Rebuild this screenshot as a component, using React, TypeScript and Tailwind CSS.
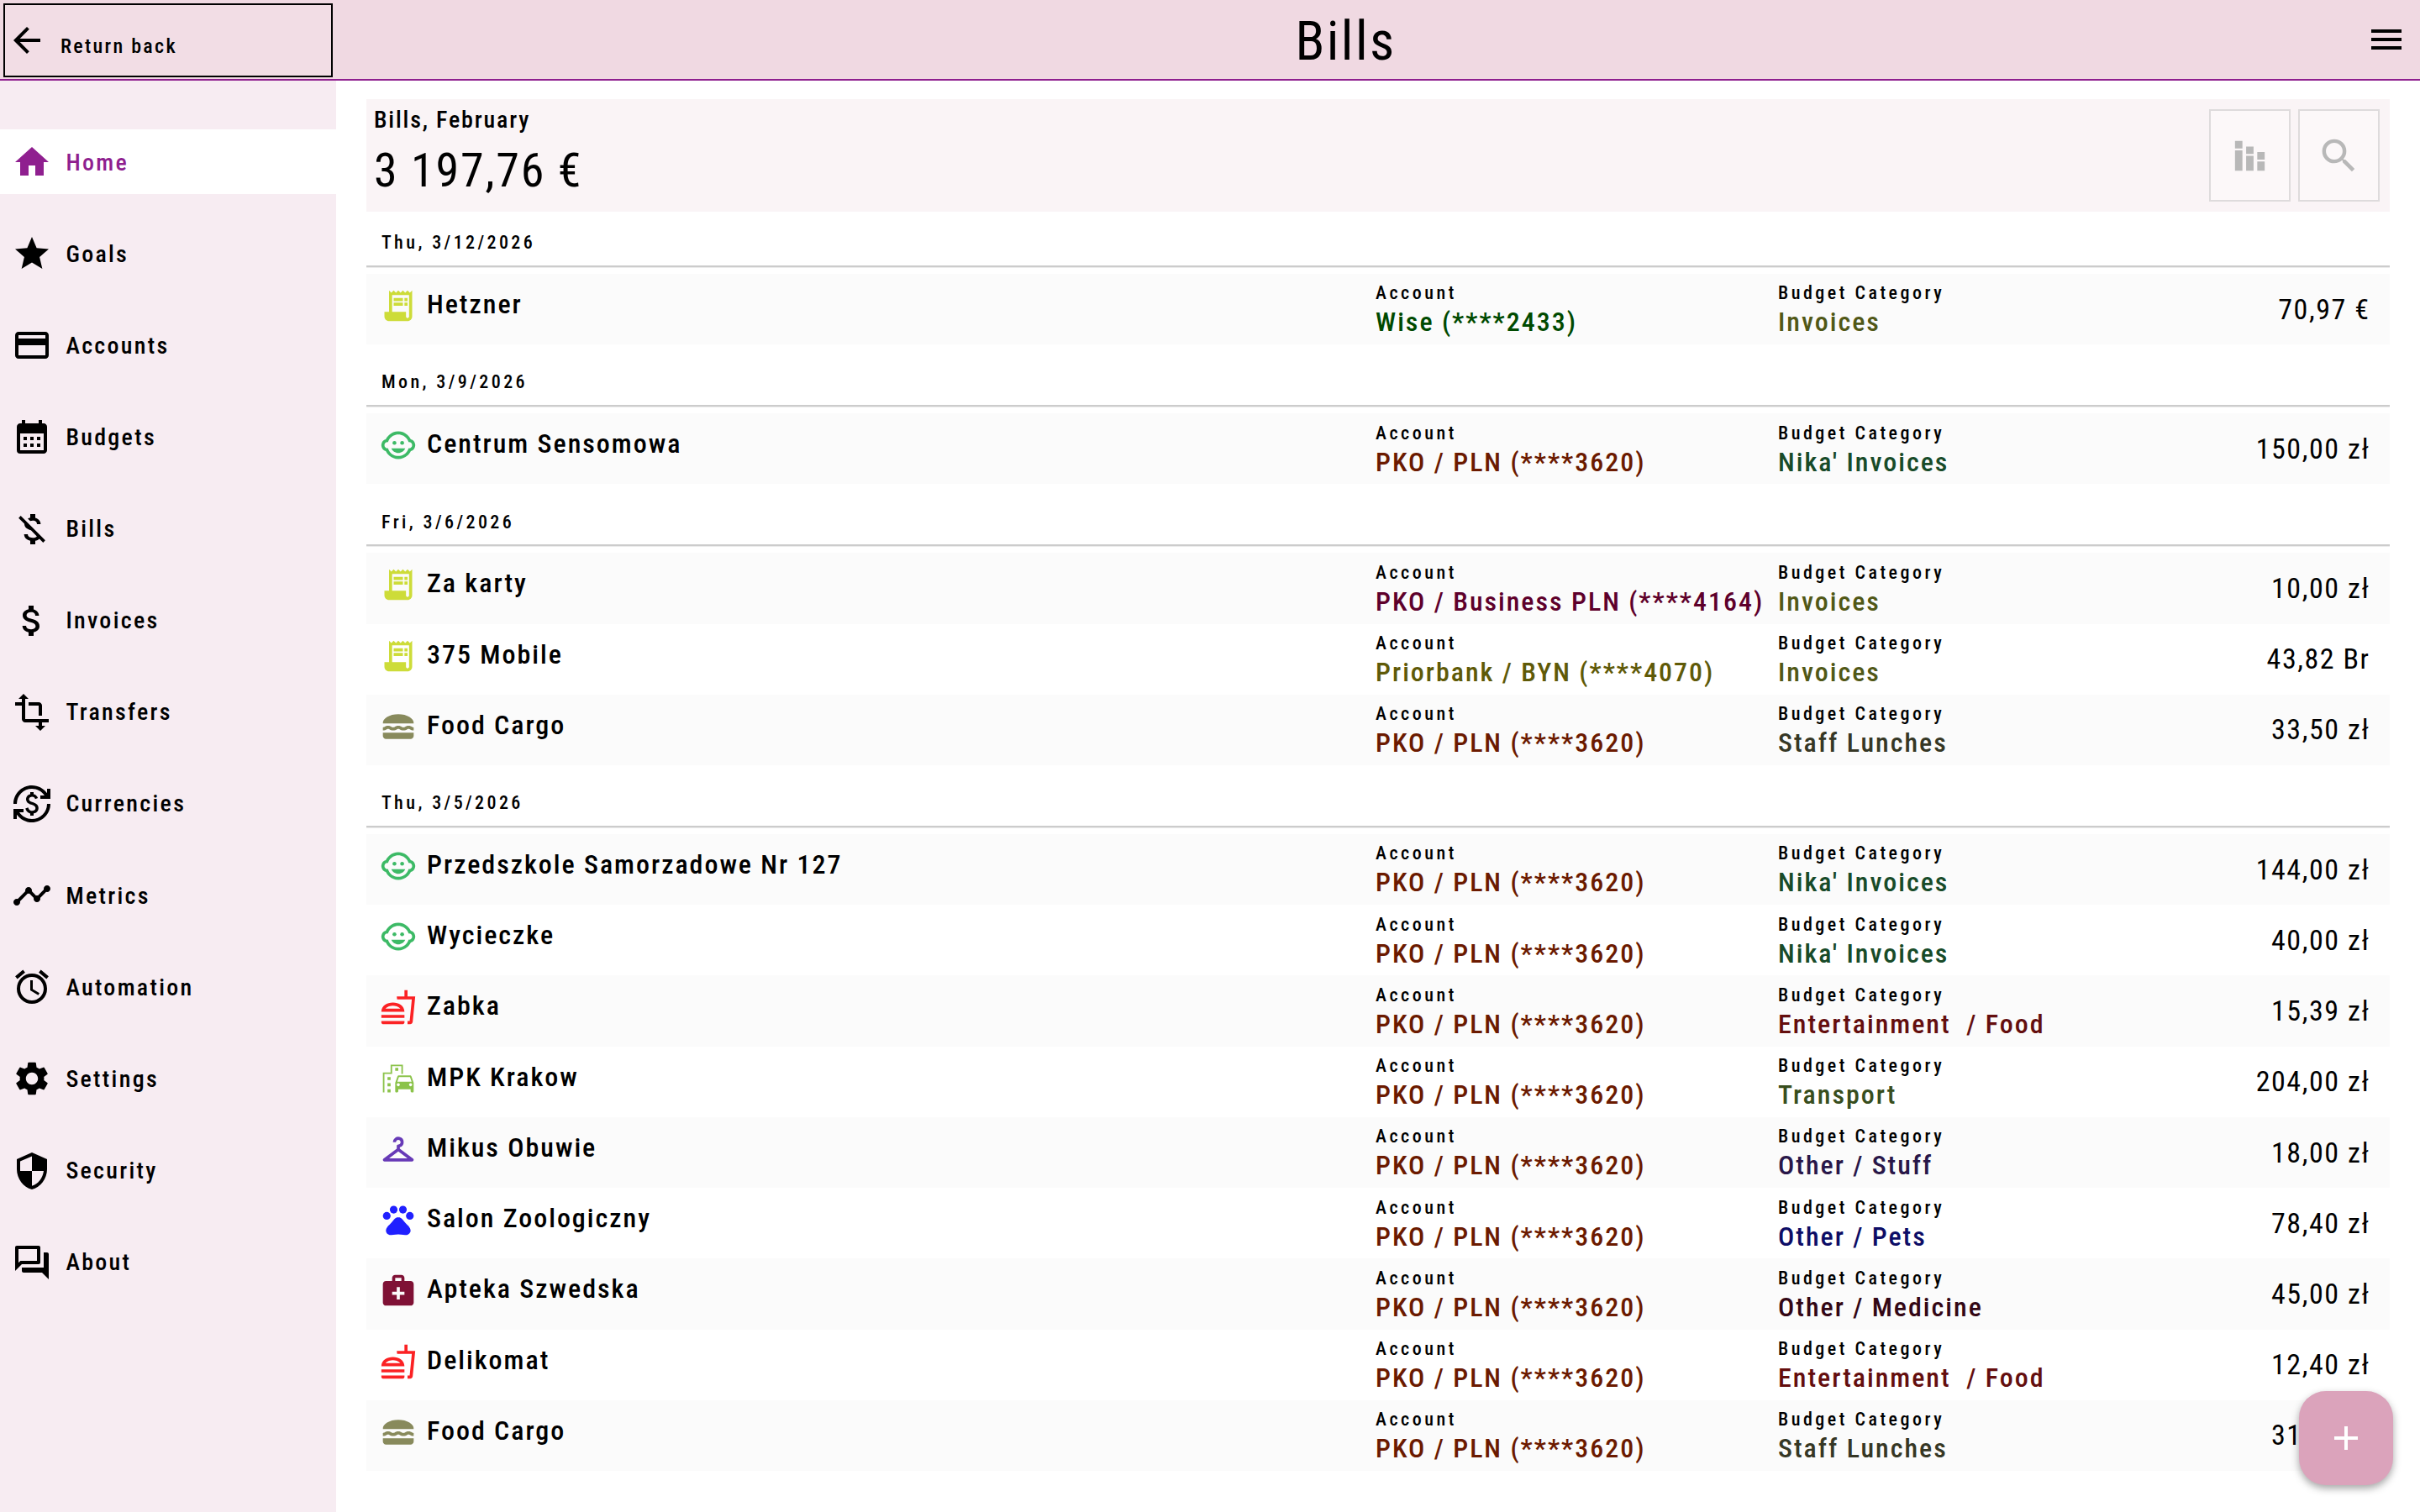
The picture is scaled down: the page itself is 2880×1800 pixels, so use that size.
import React from 'react';
import type { IconType } from 'react-icons';
import {
  MdAdd,
  MdArrowBack,
  MdAttachMoney,
  MdCalendarMonth,
  MdCheckroom,
  MdCreditCard,
  MdCurrencyExchange,
  MdEmojiTransportation,
  MdHome,
  MdLunchDining,
  MdMedicalServices,
  MdMenu,
  MdMoneyOff,
  MdOutlineAlarm,
  MdOutlineChildCare,
  MdOutlineFastfood,
  MdOutlineForum,
  MdPets,
  MdReceiptLong,
  MdSearch,
  MdSecurity,
  MdSettings,
  MdStackedBarChart,
  MdStar,
  MdTimeline,
  MdTransform,
} from 'react-icons/md';

interface Bill {
  name: string;
  kind: keyof typeof kinds;
  account: keyof typeof accounts;
  amount: string;
}

const navItems: { label: string; icon: IconType }[] = [
  { label: 'Home', icon: MdHome },
  { label: 'Goals', icon: MdStar },
  { label: 'Accounts', icon: MdCreditCard },
  { label: 'Budgets', icon: MdCalendarMonth },
  { label: 'Bills', icon: MdMoneyOff },
  { label: 'Invoices', icon: MdAttachMoney },
  { label: 'Transfers', icon: MdTransform },
  { label: 'Currencies', icon: MdCurrencyExchange },
  { label: 'Metrics', icon: MdTimeline },
  { label: 'Automation', icon: MdOutlineAlarm },
  { label: 'Settings', icon: MdSettings },
  { label: 'Security', icon: MdSecurity },
  { label: 'About', icon: MdOutlineForum },
];

const accounts = {
  wise: { label: 'Wise (****2433)', color: 'text-[#004a00]' },
  pko: { label: 'PKO / PLN (****3620)', color: 'text-[#6b1a00]' },
  business: { label: 'PKO / Business PLN (****4164)', color: 'text-[#5e002b]' },
  priorbank: { label: 'Priorbank / BYN (****4070)', color: 'text-[#5f5a08]' },
};

// Icon, icon colour and category text for every kind of bill.
const kinds = {
  invoices: { icon: MdReceiptLong, iconColor: 'text-[#cddc39]', category: 'Invoices', color: 'text-[#515817]' },
  nika: { icon: MdOutlineChildCare, iconColor: 'text-[#3dba66]', category: "Nika' Invoices", color: 'text-[#184b29]' },
  lunches: { icon: MdLunchDining, iconColor: 'text-[#888a5c]', category: 'Staff Lunches', color: 'text-[#363725]' },
  food: { icon: MdOutlineFastfood, iconColor: 'text-[#fb2224]', category: 'Entertainment  / Food', color: 'text-[#640e0e]' },
  transport: { icon: MdEmojiTransportation, iconColor: 'text-[#8bc34a]', category: 'Transport', color: 'text-[#384e1e]' },
  stuff: { icon: MdCheckroom, iconColor: 'text-[#673ab7]', category: 'Other / Stuff', color: 'text-[#291749]' },
  pets: { icon: MdPets, iconColor: 'text-[#2020ff]', category: 'Other / Pets', color: 'text-[#0d0d66]' },
  medicine: { icon: MdMedicalServices, iconColor: 'text-[#7f1135]', category: 'Other / Medicine', color: 'text-[#330715]' },
};

const groups: { date: string; bills: Bill[] }[] = [
  {
    date: 'Thu, 3/12/2026',
    bills: [{ name: 'Hetzner', kind: 'invoices', account: 'wise', amount: '70,97 €' }],
  },
  {
    date: 'Mon, 3/9/2026',
    bills: [{ name: 'Centrum Sensomowa', kind: 'nika', account: 'pko', amount: '150,00 zł' }],
  },
  {
    date: 'Fri, 3/6/2026',
    bills: [
      { name: 'Za karty', kind: 'invoices', account: 'business', amount: '10,00 zł' },
      { name: '375 Mobile', kind: 'invoices', account: 'priorbank', amount: '43,82 Br' },
      { name: 'Food Cargo', kind: 'lunches', account: 'pko', amount: '33,50 zł' },
    ],
  },
  {
    date: 'Thu, 3/5/2026',
    bills: [
      { name: 'Przedszkole Samorzadowe Nr 127', kind: 'nika', account: 'pko', amount: '144,00 zł' },
      { name: 'Wycieczke', kind: 'nika', account: 'pko', amount: '40,00 zł' },
      { name: 'Zabka', kind: 'food', account: 'pko', amount: '15,39 zł' },
      { name: 'MPK Krakow', kind: 'transport', account: 'pko', amount: '204,00 zł' },
      { name: 'Mikus Obuwie', kind: 'stuff', account: 'pko', amount: '18,00 zł' },
      { name: 'Salon Zoologiczny', kind: 'pets', account: 'pko', amount: '78,40 zł' },
      { name: 'Apteka Szwedska', kind: 'medicine', account: 'pko', amount: '45,00 zł' },
      { name: 'Delikomat', kind: 'food', account: 'pko', amount: '12,40 zł' },
      { name: 'Food Cargo', kind: 'lunches', account: 'pko', amount: '31,00 zł' },
    ],
  },
];

const Header: React.FC = () => (
  <header className="flex h-24 items-center border-b-2 border-[#8f1f8f] bg-[#f0d9e2]">
    <div className="h-full w-[400px] p-1 pb-0.5">
      <button className="flex h-[88px] w-full items-center gap-[13px] border-2 border-black bg-[#f2dde5] pl-0.5">
        <MdArrowBack className="size-12" />
        <span className="pt-[14px] pl-[3px] text-[24px] leading-8 font-medium tracking-[2.28px]">Return back</span>
      </button>
    </div>
    <h1 className="w-[2400px] pt-[5px] pl-[3px] text-center text-[64px] leading-[80px] tracking-[2.4px]">Bills</h1>
    <button className="flex w-20 justify-center">
      <MdMenu className="size-12" />
    </button>
  </header>
);

const Sidebar: React.FC = () => (
  <nav className="flex w-[400px] shrink-0 flex-col gap-[32.15px] bg-[#f7ecf2] pt-[58px]">
    {navItems.map(({ label, icon: Icon }, i) => (
      <a
        key={label}
        className={`flex h-[77px] shrink-0 items-center gap-4 pl-[14.4px] ${
          i === 0 ? 'bg-white text-[#8f1f8f]' : 'text-black'
        }`}
      >
        <Icon className="mt-px size-12" />
        <span className="pt-0.5 text-[28px] leading-10 font-medium tracking-[2.3px]">{label}</span>
      </a>
    ))}
  </nav>
);

const Summary: React.FC = () => (
  <section className="flex h-[134.3px] shrink-0 justify-between bg-[#faf4f6] pl-[9px]">
    <div className="pt-[7.2px]">
      <p className="text-[28px] leading-9 font-medium tracking-[1.83px]">Bills, February</p>
      <p className="text-[56px] leading-[85px] tracking-[1.8px]">3 197,76 €</p>
    </div>
    <div className="flex gap-[9px] pt-3 pr-3">
      <button className="flex h-[110px] w-[97px] items-center justify-center border-2 border-[#dedbdc] bg-[#fcf8f9] text-[#b8b8b8]">
        <MdStackedBarChart className="size-[53px]" />
      </button>
      <button className="flex h-[110px] w-[97px] items-center justify-center border-2 border-[#dedbdc] bg-[#fcf8f9] text-[#b8b8b8]">
        <MdSearch className="size-[53px]" />
      </button>
    </div>
  </section>
);

const Detail: React.FC<{ title: string; value: string; color: string }> = ({ title, value, color }) => (
  <div className="pt-[9.4px] font-medium whitespace-pre">
    <p className="text-[22px] leading-7 tracking-[3.5px]">{title}</p>
    <p className={`text-[32px] leading-10 tracking-[1.98px] ${color}`}>{value}</p>
  </div>
);

const BillRow: React.FC<{ bill: Bill }> = ({ bill }) => {
  const kind = kinds[bill.kind];
  const account = accounts[bill.account];
  const Icon = kind.icon;

  return (
    <li className="grid h-[84.22px] grid-cols-[1201px_479px_1fr_auto] pr-[23.5px] odd:bg-[#fbfbfb]">
      <div className="flex items-start gap-3 pt-4 pl-4">
        <Icon className={`size-11 ${kind.iconColor}`} />
        <span className="text-[32px] leading-[41px] font-medium tracking-[1.98px]">{bill.name}</span>
      </div>
      <Detail title="Account" value={account.label} color={account.color} />
      <Detail title="Budget Category" value={kind.category} color={kind.color} />
      <span className="self-center pb-px text-[34px] leading-10 tracking-[1.55px]">{bill.amount}</span>
    </li>
  );
};

const App: React.FC = () => {
  return (
    <div className="flex h-[1800px] w-[2880px] flex-col overflow-hidden bg-white font-['Roboto_Condensed','Roboto',sans-serif] text-black font-stretch-condensed">
      <Header />
      <div className="flex min-h-0 flex-1">
        <Sidebar />
        <main className="flex-1 pt-[22px] pr-9 pl-9">
          <Summary />
          {groups.map((group) => (
            <section key={group.date} className="mt-[8.3px] [&:nth-of-type(2)]:mt-0">
              <h2 className="border-b-2 border-[#cccccc] pt-[22.8px] pb-[12.9px] pl-[18px] text-[22px] leading-7 font-medium tracking-[3.4px]">
                {group.date}
              </h2>
              <ul className="border-t border-[#ebebeb] pt-[7px]">
                {group.bills.map((bill, i) => (
                  <BillRow key={i} bill={bill} />
                ))}
              </ul>
            </section>
          ))}
        </main>
      </div>
      <button className="fixed top-[1656px] left-[2736px] flex size-28 items-center justify-center rounded-[32px] bg-[#dba3bb] text-white shadow-[0_4px_10px_rgba(0,0,0,0.35)]">
        <MdAdd className="size-12" />
      </button>
    </div>
  );
};

export default App;
